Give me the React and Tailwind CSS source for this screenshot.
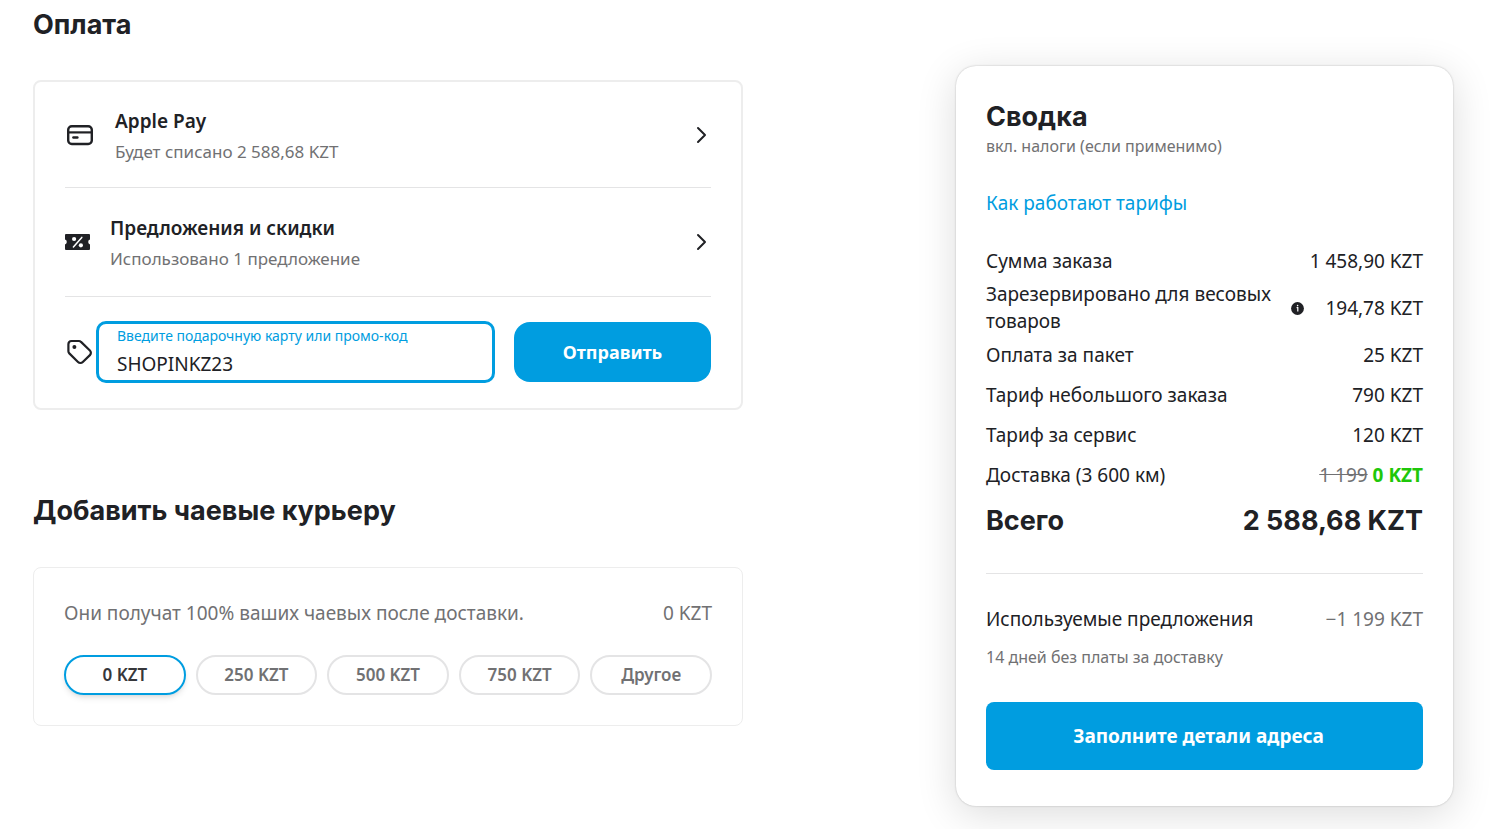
import React, { useState } from 'react';

const tips = ['0 KZT', '250 KZT', '500 KZT', '750 KZT', 'Другое'];

const CardIcon = () => (
    <svg width="30" height="30" viewBox="0 0 30 30" fill="none" className="shrink-0">
        <rect x="3.2" y="6.2" width="23.6" height="17.8" rx="3.6" stroke="#202125" strokeWidth="2.4" />
        <path d="M3.5 12.4h23" stroke="#202125" strokeWidth="2.2" />
        <path d="M8.4 17.5h4" stroke="#202125" strokeWidth="2.4" strokeLinecap="round" />
    </svg>
);

const CouponIcon = () => (
    <svg width="25" height="16" viewBox="0 0 25 16" className="shrink-0">
        <path
            d="M1 0h23a1 1 0 0 1 1 1v4.6a2.5 2.5 0 0 0 0 4.8V15a1 1 0 0 1-1 1H1a1 1 0 0 1-1-1v-4.6a2.5 2.5 0 0 0 0-4.8V1a1 1 0 0 1 1-1Z"
            fill="#202125"
        />
        <path d="M16.8 3.4 8.4 13" stroke="#fff" strokeWidth="1.5" strokeLinecap="round" />
        <circle cx="9.1" cy="5" r="2.1" fill="#fff" />
        <circle cx="15.9" cy="11.3" r="2.1" fill="#fff" />
    </svg>
);

const TagIcon = () => (
    <svg width="30" height="30" viewBox="0 0 30 30" fill="none" className="shrink-0">
        <path
            d="M3.4 7.3v7a3 3 0 0 0 .9 2.1l8.7 8.6a3.4 3.4 0 0 0 4.8 0l7.1-6.9a3.2 3.2 0 0 0 0-4.6L16 4.9a3 3 0 0 0-2.1-.9H6.6a3.3 3.3 0 0 0-3.2 3.3Z"
            stroke="#202125"
            strokeWidth="2.2"
        />
        <circle cx="9.4" cy="9.9" r="2" fill="#202125" />
    </svg>
);

const Chevron = () => (
    <svg width="20" height="20" viewBox="0 0 20 20" fill="none" className="shrink-0">
        <path d="m7 3 7 7-7 7" stroke="#202125" strokeWidth="2" strokeLinecap="round" strokeLinejoin="round" />
    </svg>
);

const InfoIcon = () => (
    <svg width="13" height="13" viewBox="0 0 13 13" className="shrink-0">
        <circle cx="6.5" cy="6.5" r="6.4" fill="#202125" />
        <path d="M5.6 5.6h1.2v4" stroke="#fff" strokeWidth="1.2" fill="none" />
        <circle cx="6.6" cy="3.6" r=".8" fill="#fff" />
    </svg>
);

const PaymentRow = ({ icon, title, note, className }) => (
    <button type="button" className={`flex w-full items-center gap-5 border-b border-[#e4e4e5] text-left ${className}`}>
        {icon}
        <span className="grow pt-[2px]">
            <span className="block text-[19px] leading-[30px] font-semibold">{title}</span>
            <span className="mt-[2px] block text-[17px] leading-7 text-[#717173]">{note}</span>
        </span>
        <Chevron />
    </button>
);

const SummaryRow = ({ label, info, children }) => (
    <div className="flex min-h-10 items-center justify-between leading-[27px]">
        <dt className="grow">{label}</dt>
        {info && (
            <button type="button" aria-label="Подробнее" className="mr-[21px]">
                <InfoIcon />
            </button>
        )}
        <dd className="shrink-0 text-right">{children}</dd>
    </div>
);

const Heading = ({ children }) => (
    <h2 className="font-[Inter,sans-serif] text-[27px] leading-8 font-bold">{children}</h2>
);

const App = () => {
    const [code, setCode] = useState('SHOPINKZ23');
    const [tip, setTip] = useState('0 KZT');

    return (
        <main className="flex min-h-screen items-start justify-between bg-white pr-12 pl-[33px] font-['Noto_Sans',sans-serif] text-[#202125]">
            <div className="w-[710px] pt-[9px]">
                <Heading>Оплата</Heading>
                <section className="mt-[39px] rounded-lg border-2 border-[#ededed] px-[30px] pb-[25px]">
                    <PaymentRow
                        icon={<CardIcon />}
                        title="Apple Pay"
                        note="Будет списано 2 588,68 KZT"
                        className="pt-[22px] pb-[21px]"
                    />
                    <PaymentRow
                        icon={<CouponIcon />}
                        title="Предложения и скидки"
                        note="Использовано 1 предложение"
                        className="py-[23px]"
                    />
                    <form className="mt-6 flex items-center" onSubmit={e => e.preventDefault()}>
                        <TagIcon />
                        <div className="mr-[19px] ml-px grow rounded-[10px] border-3 border-[#009de0] px-[18px] pb-[2px]">
                            <label htmlFor="promo" className="block text-sm leading-6 text-[#009de0]">
                                Введите подарочную карту или промо-код
                            </label>
                            <input
                                id="promo"
                                value={code}
                                onChange={e => setCode(e.target.value)}
                                className="mt-[2px] block w-full text-[19px] leading-7 outline-none"
                            />
                        </div>
                        <button type="submit" className="h-[60px] w-[197px] rounded-2xl bg-[#009de0] text-lg font-bold text-white">
                            Отправить
                        </button>
                    </form>
                </section>

                <div className="mt-[85px]">
                    <Heading>Добавить чаевые курьеру</Heading>
                </div>
                <section className="mt-10 rounded-lg border border-[#ededed] px-[30px] pt-[31px] pb-[30px]">
                    <div className="flex justify-between text-[19px] leading-7 text-[#717173]">
                        <p>Они получат 100% ваших чаевых после доставки.</p>
                        <p>0 KZT</p>
                    </div>
                    <div className="mt-7 grid grid-cols-5 gap-[10px]">
                        {tips.map(t => (
                            <button
                                key={t}
                                type="button"
                                onClick={() => setTip(t)}
                                className={`h-10 rounded-full border-2 text-[17px] font-semibold ${
                                    tip === t
                                        ? 'border-[#009de0] text-[#36373b] shadow-md'
                                        : 'border-[#e4e4e5] text-[#717173]'
                                }`}
                            >
                                {t}
                            </button>
                        ))}
                    </div>
                </section>
            </div>

            <aside className="mt-[66px] w-[497px] rounded-[20px] bg-white px-[30px] pt-[35px] pb-9 text-[19px] shadow-[0_0_2px_rgba(0,0,0,0.25),0_8px_40px_rgba(0,0,0,0.14)]">
                <Heading>Сводка</Heading>
                <p className="text-base leading-[27px] text-[#717173]">вкл. налоги (если применимо)</p>
                <a href="#fees" className="mt-[29px] block leading-7 text-[#009de0]">Как работают тарифы</a>

                <dl className="mt-6">
                    <SummaryRow label="Сумма заказа">1 458,90 KZT</SummaryRow>
                    <SummaryRow label="Зарезервировано для весовых товаров" info>194,78 KZT</SummaryRow>
                    <SummaryRow label="Оплата за пакет">25 KZT</SummaryRow>
                    <SummaryRow label="Тариф небольшого заказа">790 KZT</SummaryRow>
                    <SummaryRow label="Тариф за сервис">120 KZT</SummaryRow>
                    <SummaryRow label="Доставка (3 600 км)">
                        <s className="text-[#717173]">1 199</s> <b className="text-[#1fc70a]">0 KZT</b>
                    </SummaryRow>
                </dl>
                <div className="mt-[10px] flex justify-between border-b border-[#e4e4e5] pb-9">
                    <Heading>Всего</Heading>
                    <Heading>2 588,68 KZT</Heading>
                </div>

                <div className="mt-[31px] flex justify-between leading-7">
                    <p>Используемые предложения</p>
                    <p className="text-[#717173]">−1 199 KZT</p>
                </div>
                <p className="mt-[10px] text-base leading-7 text-[#717173]">14 дней без платы за доставку</p>
                <button type="button" className="mt-[31px] h-[68px] w-full rounded-lg bg-[#009de0] pr-3 font-bold text-white">
                    Заполните детали адреса
                </button>
            </aside>
        </main>
    );
};

export default App;
